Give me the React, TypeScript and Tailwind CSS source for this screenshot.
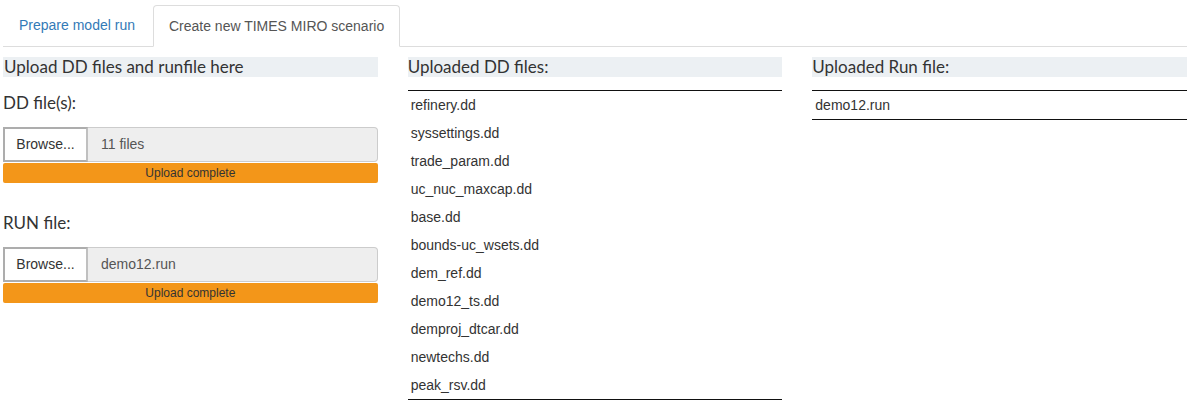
import React from "react";

const ddFiles = [
  "refinery.dd",
  "syssettings.dd",
  "trade_param.dd",
  "uc_nuc_maxcap.dd",
  "base.dd",
  "bounds-uc_wsets.dd",
  "dem_ref.dd",
  "demo12_ts.dd",
  "demproj_dtcar.dd",
  "newtechs.dd",
  "peak_rsv.dd",
];

const sourceSans = "text-[17px] leading-5 font-['Lato','Noto_Sans',sans-serif]";
const heading = "h-5 bg-[#ecf0f3] text-[#333] " + sourceSans;

const FileInput = ({ value }: { value: string }) => (
  <div>
    <div className="flex h-[35px]">
      <div className="w-[85px] flex items-center justify-center bg-white border-2 border-[#adadad] border-r-[#c0c0c0] text-[14px] text-[#333]">
        Browse...
      </div>
      <div className="flex-1 flex items-center pl-[13px] bg-[#eee] border border-l-0 border-[#ccc] rounded-r-[4px] text-[14px] text-[#555]">
        {value}
      </div>
    </div>
    <div className="mt-[1px] h-5 bg-[#f39619] rounded-[2px] flex items-center justify-center text-[12px] text-[#333]">
      Upload complete
    </div>
  </div>
);

export default function App() {
  return (
    <div className="w-[1190px] h-[405px] bg-white font-['Liberation_Sans',Arial,sans-serif] text-[#333] overflow-hidden">
      <div className="flex items-end h-[47px] pt-[5px] mx-[3px] border-b border-[#ddd]">
        <div className="h-[41px] pl-4 pr-[18px] flex items-center text-[14px] text-[#337ab7]">
          Prepare model run
        </div>
        <div className="h-[42px] -mb-px px-[15px] flex items-center bg-white border border-[#ddd] border-b-white rounded-t-[4px] text-[14px] text-[#555]">
          Create new TIMES MIRO scenario
        </div>
      </div>

      <div className="grid grid-cols-3 gap-[30px] px-[3px] pt-[10px]">
        <div>
          <div className={heading + " pl-[1px]"}>Upload DD files and runfile here</div>
          <div className={"mt-[16px] " + sourceSans}>DD file(s):</div>
          <div className="mt-[14px]">
            <FileInput value="11 files" />
          </div>
          <div className={"mt-[30px] " + sourceSans}>RUN file:</div>
          <div className="mt-[14px]">
            <FileInput value="demo12.run" />
          </div>
        </div>

        <div>
          <div className={heading}>Uploaded DD files:</div>
          <div className="mt-[13px] border-t border-b border-[#111]">
            {ddFiles.map((f) => (
              <div key={f} className="h-7 flex items-center pl-[3px] text-[14px]">
                {f}
              </div>
            ))}
          </div>
        </div>

        <div>
          <div className={heading}>Uploaded Run file:</div>
          <div className="mt-[13px] border-t border-b border-[#111]">
            <div className="h-7 flex items-center pl-[3px] text-[14px]">demo12.run</div>
          </div>
        </div>
      </div>
    </div>
  );
}
